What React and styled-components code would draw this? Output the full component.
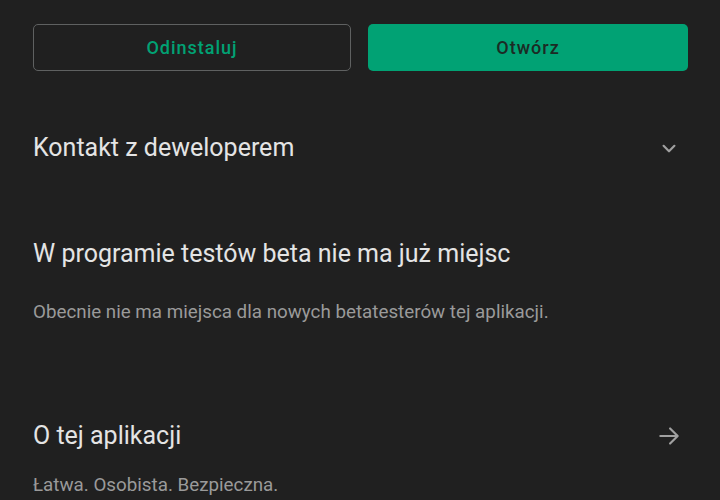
import styled, { createGlobalStyle } from 'styled-components';

const Global = createGlobalStyle`
  html, body {
    margin: 0;
    padding: 0;
    background: #202020;
  }
  body {
    font-family: Roboto, "Noto Sans", "Liberation Sans", sans-serif;
  }
`;

const Page = styled.div`
  width: 720px;
  height: 500px;
  overflow: hidden;
  box-sizing: border-box;
  padding: 24px 32px 0 33px;
  background: #202020;
`;

const ButtonRow = styled.div`
  display: grid;
  grid-template-columns: 318px 320px;
  gap: 17px;
`;

const Button = styled.button`
  height: 47px;
  box-sizing: border-box;
  border-radius: 5px;
  font-family: inherit;
  font-size: 18px;
  font-weight: 500;
  letter-spacing: 1px;
  border: ${p => (p.$primary ? 'none' : '1.5px solid #5f6161')};
  background: ${p => (p.$primary ? '#01a274' : 'transparent')};
  color: ${p => (p.$primary ? '#1c2a24' : '#01a274')};
`;

const Section = styled.div`
  margin-top: ${p => p.$top}px;
`;

const HeaderRow = styled.div`
  display: flex;
  align-items: center;
  justify-content: space-between;
  height: 32px;
  padding-right: 6px;
`;

const Title = styled.div`
  font-size: 25px;
  color: #e4e4e4;
  line-height: 32px;
`;

const Text = styled.div`
  font-size: 18.8px;
  color: #9a9a9a;
  line-height: 24px;
  margin-top: ${p => p.$top}px;
`;

const Icon = styled.svg`
  width: 26px;
  height: 26px;
  stroke: #a0a0a0;
  fill: none;
  stroke-width: 2;
  stroke-linecap: round;
  stroke-linejoin: round;
`;

export default function App() {
  return (
    <>
      <Global />
      <Page>
        <ButtonRow>
          <Button>Odinstaluj</Button>
          <Button $primary>Otwórz</Button>
        </ButtonRow>

        <Section $top={61}>
          <HeaderRow>
            <Title>Kontakt z deweloperem</Title>
            <Icon viewBox="0 0 24 24">
              <path d="M7 10l5 5 5-5" />
            </Icon>
          </HeaderRow>
        </Section>

        <Section $top={74}>
          <HeaderRow>
            <Title>W programie testów beta nie ma już miejsc</Title>
          </HeaderRow>
          <Text $top={30}>Obecnie nie ma miejsca dla nowych betatesterów tej aplikacji.</Text>
        </Section>

        <Section $top={96}>
          <HeaderRow>
            <Title>O tej aplikacji</Title>
            <Icon viewBox="0 0 24 24">
              <path d="M4 12h15M13 5l7 7-7 7" />
            </Icon>
          </HeaderRow>
          <Text $top={21}>Łatwa. Osobista. Bezpieczna.</Text>
        </Section>
      </Page>
    </>
  );
}
